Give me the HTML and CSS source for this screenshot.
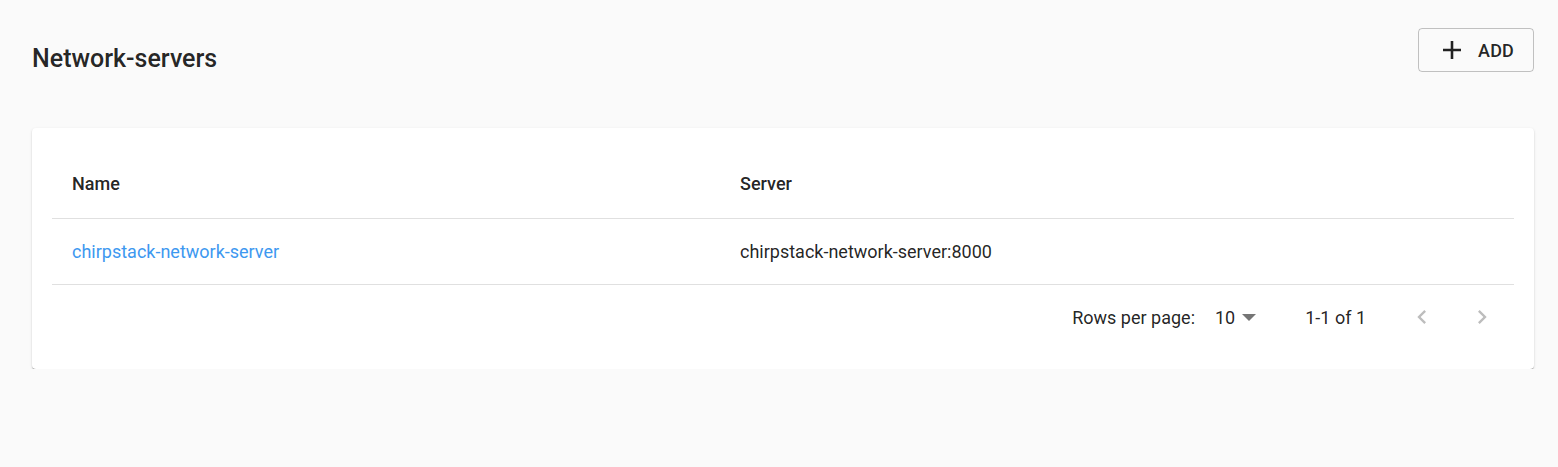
FILE: index.html
```html
<!DOCTYPE html>
<html>
<head>
<meta charset="utf-8">
<link rel="stylesheet" href="styles.css">
</head>
<body>
<div class="page">
  <div class="header">
    <h1 class="title">Network-servers</h1>
    <button class="add-btn">
      <svg class="plus" viewBox="5 5 14 14" width="18" height="18"><path d="M19 13h-6v6h-2v-6H5v-2h6V5h2v6h6v2z" fill="currentColor"/></svg>
      <span>ADD</span>
    </button>
  </div>
  <div class="card">
    <table class="table">
      <thead>
        <tr class="head-row">
          <th class="col-name">Name</th>
          <th>Server</th>
        </tr>
      </thead>
      <tbody>
        <tr class="body-row">
          <td class="col-name"><a class="link" href="#">chirpstack-network-server</a></td>
          <td>chirpstack-network-server:8000</td>
        </tr>
      </tbody>
    </table>
    <div class="pagination">
      <span class="rpp">Rows per page:</span>
      <span class="select">10
        <svg viewBox="0 0 10 5" width="14" height="7" class="caret"><path d="M0 0l5 5 5-5z" fill="currentColor"/></svg>
      </span>
      <span class="range">1-1 of 1</span>
      <span class="nav">
        <svg viewBox="0 0 24 24" width="28" height="28"><path d="M15.41 7.41L14 6l-6 6 6 6 1.41-1.41L10.83 12z" fill="currentColor"/></svg>
      </span>
      <span class="nav">
        <svg viewBox="0 0 24 24" width="28" height="28"><path d="M10 6L8.59 7.41 13.17 12l-4.58 4.59L10 18l6-6z" fill="currentColor"/></svg>
      </span>
    </div>
  </div>
</div>
</body>
</html>
```
FILE: styles.css
```css
html, body {
  margin: 0;
  padding: 0;
  background: #fafafa;
  font-family: Roboto, "Liberation Sans", sans-serif;
  color: rgba(0,0,0,0.87);
}
.page {
  padding: 28px 24px 0 32px;
}
.header {
  display: flex;
  justify-content: space-between;
  align-items: flex-start;
  height: 100px;
}
.title {
  margin: 0;
  margin-top: 15px;
  font-size: 25px;
  font-weight: 500;
  line-height: 32px;
}
.add-btn {
  display: flex;
  align-items: center;
  gap: 17px;
  width: 116px;
  height: 44px;
  padding: 0 0 0 24px;
  border: 1px solid rgba(0,0,0,0.23);
  border-radius: 4px;
  background: transparent;
  font-family: Roboto, "Liberation Sans", sans-serif;
  font-size: 18px;
  font-weight: 500;
  letter-spacing: 0.2px;
  color: rgba(0,0,0,0.87);
  box-sizing: border-box;
}
.plus {
  flex: none;
}
.card {
  background: #fff;
  border-radius: 4px;
  box-shadow: 0 2px 1px -1px rgba(0,0,0,0.3), 0 1px 1px 0 rgba(0,0,0,0.16), 0 1px 3px 0 rgba(0,0,0,0.12);
  padding: 20px 20px 20px 20px;
}
.table {
  width: 100%;
  border-collapse: collapse;
  font-size: 18px;
}
.table th, .table td {
  text-align: left;
  padding: 0 20px;
  border-bottom: 1px solid #e0e0e0;
}
.table th {
  font-weight: 500;
  height: 70px;
}
.table td {
  height: 65px;
}
.col-name {
  width: 628px;
}
.link {
  color: #3d98f0;
  text-decoration: none;
}
.pagination {
  display: flex;
  align-items: center;
  justify-content: flex-end;
  height: 64px;
  font-size: 18px;
  padding-right: 18px;
}
.rpp {
  margin-right: 20px;
}
.select {
  display: flex;
  align-items: center;
  gap: 7px;
  margin-right: 49px;
}
.caret {
  color: #757575;
}
.range {
  margin-right: 42px;
}
.nav {
  display: flex;
  color: #bdbdbd;
}
.nav + .nav {
  margin-left: 32px;
}
```
